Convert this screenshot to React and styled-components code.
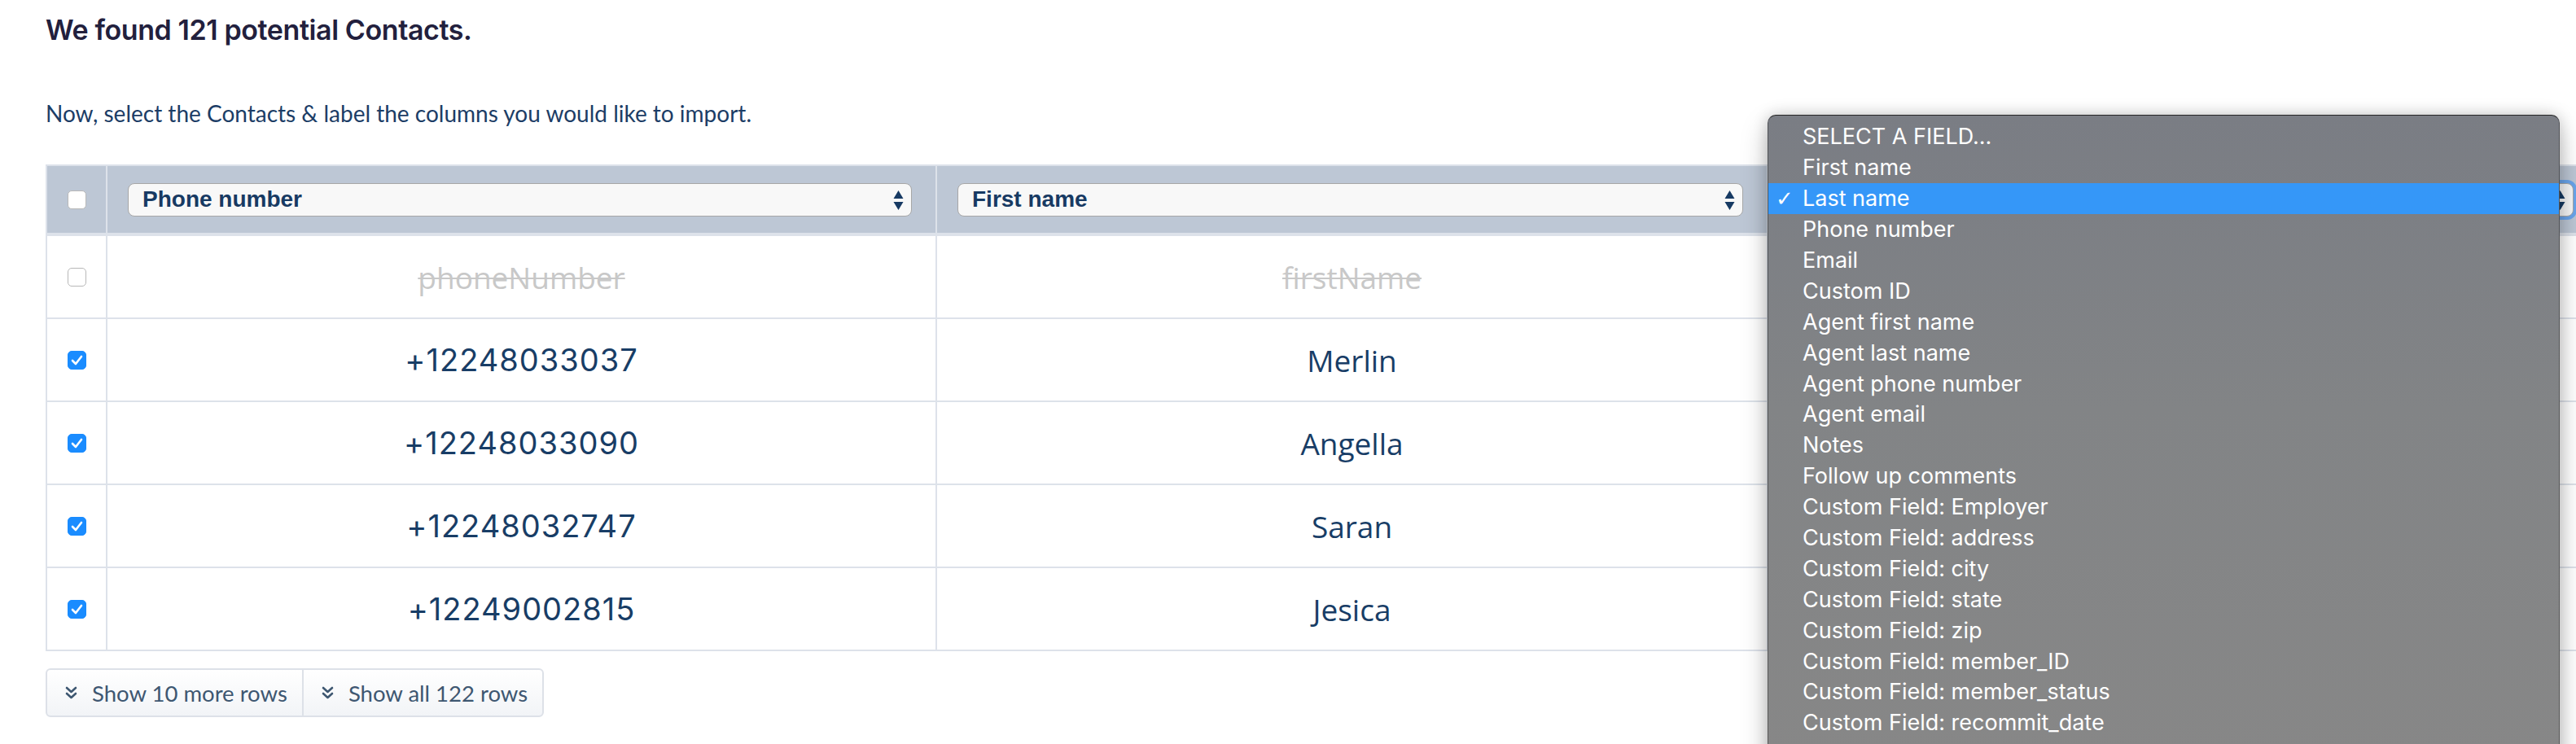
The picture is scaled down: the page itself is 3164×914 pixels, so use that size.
import React from "react";
import styled, { createGlobalStyle, css } from "styled-components";

const GlobalStyle = createGlobalStyle`
  html, body {
    margin: 0;
    padding: 0;
    background: #ffffff;
    overflow: hidden;
  }
  * {
    box-sizing: border-box;
  }
`;

const FIELDS = [
  "SELECT A FIELD...",
  "First name",
  "Last name",
  "Phone number",
  "Email",
  "Custom ID",
  "Agent first name",
  "Agent last name",
  "Agent phone number",
  "Agent email",
  "Notes",
  "Follow up comments",
  "Custom Field: Employer",
  "Custom Field: address",
  "Custom Field: city",
  "Custom Field: state",
  "Custom Field: zip",
  "Custom Field: member_ID",
  "Custom Field: member_status",
  "Custom Field: recommit_date",
];

const columns = [
  { label: "Phone number", key: "phoneNumber", mono: true },
  { label: "First name", key: "firstName" },
  { label: "Last name", key: "lastName", focused: true },
];

const contacts = [
  { phoneNumber: "+12248033037", firstName: "Merlin", lastName: "" },
  { phoneNumber: "+12248033090", firstName: "Angella", lastName: "" },
  { phoneNumber: "+12248032747", firstName: "Saran", lastName: "" },
  { phoneNumber: "+12249002815", firstName: "Jesica", lastName: "" },
];

const Page = styled.div`
  position: relative;
  width: 3164px;
  height: 914px;
  padding-left: 56px;
  padding-top: 16px;
`;

const Title = styled.h1`
  margin: 0;
  font-family: Inter, "Noto Sans", sans-serif;
  font-weight: 600;
  font-size: 34px;
  line-height: 41px;
  letter-spacing: -0.4px;
  color: #22203d;
`;

const Lead = styled.p`
  margin: 67px 0 0;
  font-family: Lato, "Open Sans", sans-serif;
  font-size: 28px;
  line-height: 30px;
  color: #1c3d66;
`;

const Grid = styled.div`
  margin-top: 48px;
  width: 3134px;
  border-left: 2px solid #dde2ea;
  border-top: 2px solid #dde2ea;
`;

const Row = styled.div`
  display: grid;
  grid-template-columns: 74px 1019px 1021px 1020px;
  height: ${(p) => (p.head ? "86px" : "102px")};
  background: ${(p) => (p.head ? "#bdc7d5" : "#ffffff")};
  border-bottom: ${(p) => (p.head ? "4px" : "2px")} solid #dde2ea;
`;

const Cell = styled.div`
  display: flex;
  align-items: center;
  justify-content: center;
  border-right: 2px solid #dde2ea;
  padding: ${(p) => (p.select ? "0 29px 0 25px" : "0")};
`;

const Box = styled.span`
  width: 23px;
  height: 23px;
  border-radius: 5px;
  display: inline-flex;
  align-items: center;
  justify-content: center;
  background: #ffffff;
  border: 1.5px solid #b8b8b8;
  ${(p) =>
    p.checked &&
    css`
      background: #1a8cff;
      border-color: #1a8cff;
    `}
`;

const Select = styled.div`
  position: relative;
  width: 100%;
  height: 41px;
  display: flex;
  align-items: center;
  padding-left: 17px;
  background: #f8f8f8;
  border: 1.5px solid #a7a7a7;
  border-radius: 8px;
  font-family: "Liberation Sans", Arial, sans-serif;
  font-weight: 700;
  font-size: 28px;
  color: #173a63;
  ${(p) =>
    p.focused &&
    css`
      box-shadow: 0 0 0 4px #6aa5ec;
    `}
`;

const Arrows = styled.svg`
  position: absolute;
  right: 9px;
  top: 8px;
`;

const Ghost = styled.span`
  font-family: "Open Sans", Lato, sans-serif;
  font-size: 37px;
  color: #c8c8c8;
  text-decoration: line-through;
  text-decoration-thickness: 2px;
`;

const Value = styled.span`
  font-family: ${(p) => (p.mono ? "Inter, sans-serif" : '"Open Sans", Lato, sans-serif')};
  font-size: ${(p) => (p.mono ? "38px" : "37px")};
  letter-spacing: ${(p) => (p.mono ? "1px" : "0")};
  color: #183d66;
`;

const More = styled.div`
  margin-top: 21px;
  display: inline-flex;
  height: 60px;
  border: 2px solid #dde1e8;
  border-radius: 6px;
  background: linear-gradient(#ffffff, #f2f4f7);
`;

const MoreButton = styled.button`
  display: flex;
  align-items: center;
  gap: 18px;
  padding: 0 18px 0 22px;
  border: none;
  background: transparent;
  font-family: Lato, "Open Sans", sans-serif;
  font-size: 27.5px;
  color: #3e5771;
  cursor: pointer;
  & + & {
    border-left: 2px solid #dde1e8;
  }
`;

const Menu = styled.ul`
  position: absolute;
  left: 2171px;
  top: 141px;
  width: 973px;
  height: 800px;
  margin: 0;
  padding: 7px 0 0;
  list-style: none;
  border-radius: 10px;
  border: 1px solid rgba(0, 0, 0, 0.35);
  border-top-color: rgba(20, 20, 20, 0.85);
  background: linear-gradient(180deg, #7a7d84 0%, #828486 45%, #878787 100%);
  box-shadow: 0 0 18px rgba(0, 0, 0, 0.18), 0 14px 34px rgba(0, 0, 0, 0.22);
`;

const Item = styled.li`
  position: relative;
  height: 37.9px;
  display: flex;
  align-items: center;
  padding-left: 42px;
  font-family: Inter, "Noto Sans", sans-serif;
  font-size: 27px;
  color: #ffffff;
  background: ${(p) => (p.active ? "#3597f8" : "transparent")};
`;

const Tick = styled.span`
  position: absolute;
  left: 9px;
  font-family: "DejaVu Sans", sans-serif;
  font-size: 26px;
`;

const Check = () => (
  <svg width="15" height="13" viewBox="0 0 15 13">
    <path d="M2 7 L6 11 L13 2" fill="none" stroke="#fff" strokeWidth="2.6" strokeLinecap="round" strokeLinejoin="round" />
  </svg>
);

const Chevrons = () => (
  <svg width="15" height="16" viewBox="0 0 15 16">
    <path d="M2 2 L7.5 7 L13 2 M2 9 L7.5 14 L13 9" fill="none" stroke="#3e5771" strokeWidth="2.6" strokeLinecap="round" strokeLinejoin="round" />
  </svg>
);

const SelectArrows = () => (
  <Arrows width="13" height="24" viewBox="0 0 13 24">
    <path d="M6.5 0 L12.5 10 L0.5 10 Z M6.5 24 L12.5 14 L0.5 14 Z" fill="#173a63" />
  </Arrows>
);

export default function App() {
  return (
    <Page>
      <GlobalStyle />
      <Title>We found 121 potential Contacts.</Title>
      <Lead>Now, select the Contacts &amp; label the columns you would like to import.</Lead>

      <Grid>
        <Row head>
          <Cell>
            <Box />
          </Cell>
          {columns.map((col) => (
            <Cell key={col.key} select>
              <Select focused={col.focused}>
                {col.label}
                <SelectArrows />
              </Select>
            </Cell>
          ))}
        </Row>
        <Row>
          <Cell>
            <Box />
          </Cell>
          {columns.map((col) => (
            <Cell key={col.key}>
              <Ghost>{col.key}</Ghost>
            </Cell>
          ))}
        </Row>
        {contacts.map((c) => (
          <Row key={c.phoneNumber}>
            <Cell>
              <Box checked>
                <Check />
              </Box>
            </Cell>
            {columns.map((col) => (
              <Cell key={col.key}>
                <Value mono={col.mono}>{c[col.key]}</Value>
              </Cell>
            ))}
          </Row>
        ))}
      </Grid>

      <More>
        <MoreButton>
          <Chevrons />
          Show 10 more rows
        </MoreButton>
        <MoreButton>
          <Chevrons />
          Show all 122 rows
        </MoreButton>
      </More>

      <Menu>
        {FIELDS.map((f) => (
          <Item key={f} active={f === "Last name"}>
            {f === "Last name" && <Tick>✓</Tick>}
            {f}
          </Item>
        ))}
      </Menu>
    </Page>
  );
}
